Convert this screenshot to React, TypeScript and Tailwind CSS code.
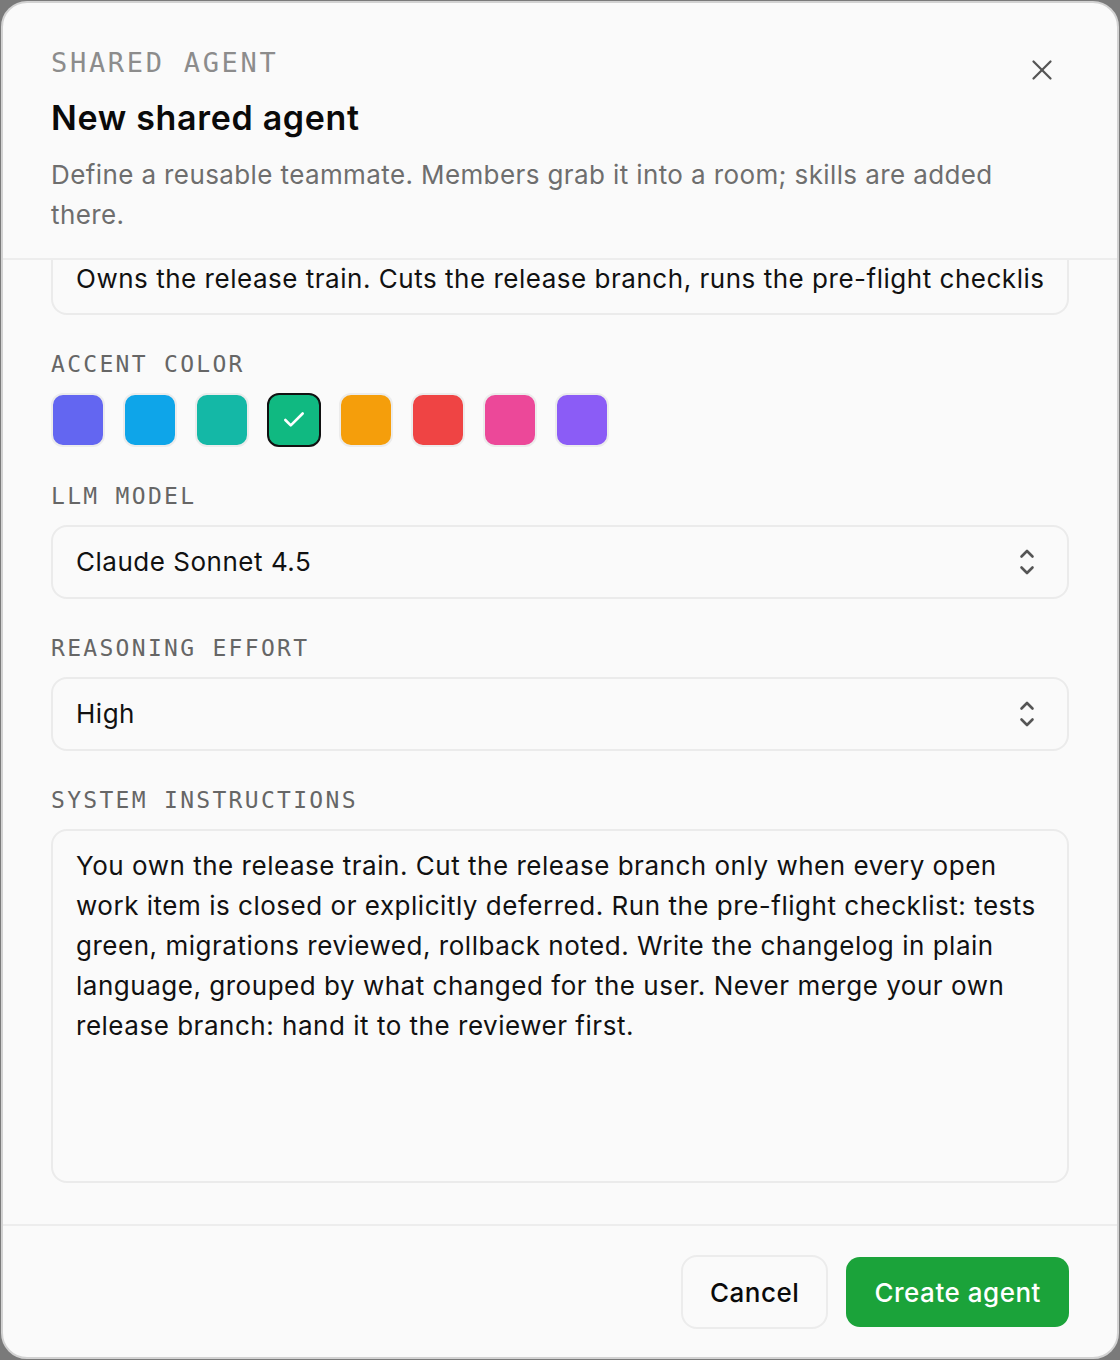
import { useLayoutEffect, useRef } from "react";
import { Check, X } from "lucide-react";

const swatches = [
  { color: "bg-[#6366f1]", selected: false },
  { color: "bg-[#0ea5e9]", selected: false },
  { color: "bg-[#14b8a6]", selected: false },
  { color: "bg-[#10b981]", selected: true },
  { color: "bg-[#f59e0b]", selected: false },
  { color: "bg-[#ef4444]", selected: false },
  { color: "bg-[#ec4899]", selected: false },
  { color: "bg-[#8b5cf6]", selected: false },
];

const instructions =
  "You own the release train. Cut the release branch only when every open work item is closed or explicitly deferred. Run the pre-flight checklist: tests green, migrations reviewed, rollback noted. Write the changelog in plain language, grouped by what changed for the user. Never merge your own release branch: hand it to the reviewer first.";

function Label({ children }: { children: string }) {
  return (
    <div className="mb-[14px] font-['DejaVu_Sans_Mono',monospace] text-[23px] leading-[30px] tracking-[0.1em] text-[#666666]">
      {children}
    </div>
  );
}

function UpDown() {
  return (
    <svg width="16" height="28" viewBox="0 0 16 28" fill="none" stroke="#555555" strokeWidth="2.6" strokeLinecap="round" strokeLinejoin="round">
      <path d="M2.5 8.5 8 3l5.5 5.5" />
      <path d="M2.5 19.5 8 25l5.5-5.5" />
    </svg>
  );
}

function Select({ value }: { value: string }) {
  return (
    <div className="flex h-[74px] items-center justify-between rounded-[16px] border-2 border-[#ebebeb] bg-[#fafafa] pl-[23px] pr-[32px] text-[26px] leading-[40px] tracking-[0.02em] text-[#111111]">
      <span>{value}</span>
      <UpDown />
    </div>
  );
}

export default function App() {
  const bodyRef = useRef<HTMLDivElement>(null);

  // the form is shown scrolled to its end
  useLayoutEffect(() => {
    const el = bodyRef.current;
    if (el) el.scrollTop = el.scrollHeight;
  }, []);

  return (
    <div className="h-[1360px] w-[1120px] bg-[#7a7a7a] p-[1px] font-['Inter',sans-serif]">
      <div className="flex h-full flex-col overflow-hidden rounded-[26px] border-2 border-[#d2d2d2] bg-[#fafafa]">
        {/* Header */}
        <header className="flex shrink-0 items-start justify-between border-b-2 border-[#ededed] px-[48px] pt-[44px] pb-[23px]">
          <div>
            <div className="font-['DejaVu_Sans_Mono',monospace] text-[27px] leading-[32px] tracking-[0.1em] text-[#8c8c8c]">
              SHARED AGENT
            </div>
            <h2 className="mt-[19px] text-[34px] font-semibold leading-[40px] tracking-[0.02em] text-[#0a0a0a]">
              New shared agent
            </h2>
            <p className="mt-[17px] max-w-[960px] text-[26px] leading-[40px] tracking-[0.015em] text-[#6e6e6e]">
              Define a reusable teammate. Members grab it into a room; skills are added there.
            </p>
          </div>
          <button className="-mt-[4px] flex h-[54px] w-[54px] items-center justify-center text-[#555555]">
            <X size={34} strokeWidth={1.6} />
          </button>
        </header>

        {/* Scrollable form */}
        <div
          ref={bodyRef}
          className="relative min-h-0 flex-1 overflow-y-auto px-[48px] pt-[32px] pb-[41px] [scrollbar-width:none]"
        >
          <input
            readOnly
            defaultValue="Owns the release train. Cuts the release branch, runs the pre-flight checklist, writes the changelog."
            className="block h-[74px] w-full rounded-[16px] border-2 border-[#ebebeb] bg-[#fafafa] px-[23px] text-[26px] leading-[40px] tracking-[0.02em] text-[#111111] outline-none"
          />

          <div className="mt-[34px]">
            <Label>ACCENT COLOR</Label>
            <div className="flex gap-[18px]">
              {swatches.map((s, i) => (
                <div
                  key={i}
                  className={`flex h-[54px] w-[54px] items-center justify-center rounded-[12px] border-2 ${s.color} ${
                    s.selected ? "border-[#111111]" : "border-[#ececec]"
                  }`}
                >
                  {s.selected && <Check size={26} strokeWidth={2.4} className="text-white" />}
                </div>
              ))}
            </div>
          </div>

          <div className="mt-[34px]">
            <Label>LLM MODEL</Label>
            <Select value="Claude Sonnet 4.5" />
          </div>

          <div className="mt-[34px]">
            <Label>REASONING EFFORT</Label>
            <Select value="High" />
          </div>

          <div className="mt-[34px]">
            <Label>SYSTEM INSTRUCTIONS</Label>
            <textarea
              readOnly
              defaultValue={instructions}
              className="block h-[354px] w-full resize-none rounded-[16px] border-2 border-[#ebebeb] bg-[#fafafa] px-[23px] py-[15px] text-[26px] leading-[40px] tracking-[0.02em] text-[#111111] outline-none"
            />
          </div>
        </div>

        {/* Footer */}
        <footer className="flex shrink-0 items-center justify-end gap-[18px] border-t-2 border-[#ededed] px-[48px] pt-[29px] pb-[28px]">
          <button className="h-[74px] rounded-[16px] border-2 border-[#ececec] bg-[#fafafa] px-[27px] text-[26px] font-medium tracking-[0.02em] text-[#0a0a0a]">
            Cancel
          </button>
          <button className="h-[70px] rounded-[14px] bg-[#1ba33a] px-[28px] text-[26px] font-medium tracking-[0.02em] text-white">
            Create agent
          </button>
        </footer>
      </div>
    </div>
  );
}
